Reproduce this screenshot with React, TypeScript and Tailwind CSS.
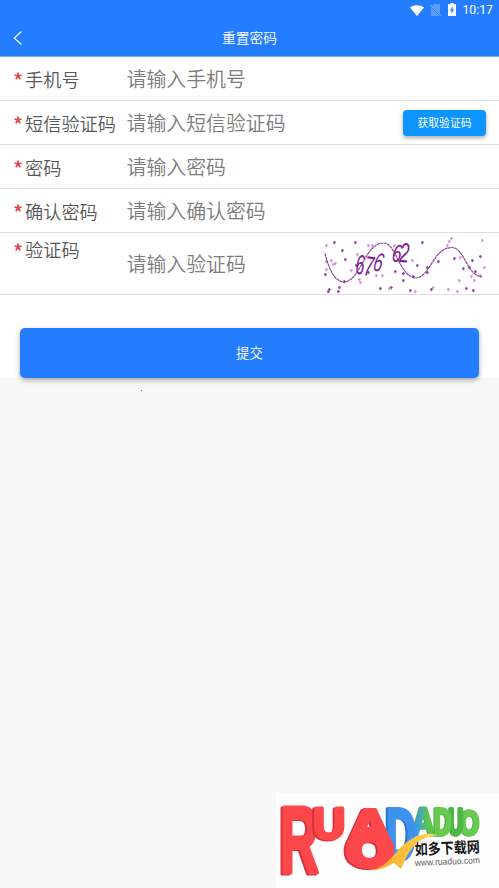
import React from 'react';

interface FieldRowProps {
  label: string;
  placeholder: string;
  children?: React.ReactNode;
}

const FieldRow: React.FC<FieldRowProps> = ({ label, placeholder, children }) => (
  <div className="flex h-11 items-center border-b border-[#dedede] pr-[13px] pl-[14px]">
    <FieldLabel text={label} />
    <input
      type="text"
      placeholder={placeholder}
      className="h-full w-0 flex-1 text-[19.9px] font-[350] text-[#666] outline-none placeholder:text-[#7c7c7c]"
    />
    {children}
  </div>
);

const FieldLabel: React.FC<{ text: string }> = ({ text }) => (
  <label className="flex w-[112.5px] shrink-0 items-center text-[18.2px] leading-[26px] font-[350] text-[#585858]">
    <svg viewBox="0 0 8 8" className="mr-[3px] mb-[5px] h-2 w-2 shrink-0">
      <path
        d="M4 4V.4M4 4L.5 3M4 4l3.500-1M4 4L1.800 7.200M4 4l2.200 3.200"
        stroke="#dc4848"
        strokeWidth="1.8"
        fill="none"
      />
    </svg>
    <span className="whitespace-nowrap">{text}</span>
  </label>
);

const StatusBar: React.FC = () => (
  <div className="flex h-5 items-center justify-end pr-[6px] text-white">
    <svg viewBox="0 0 14 11" className="mr-[6px] h-[11px] w-[14px]">
      <path d="M0 2.6C4-.6 10-.6 14 2.6L7 11z" fill="currentColor" />
    </svg>
    <svg viewBox="0 0 11 12" className="mr-[7px] mb-px h-3 w-[11px]">
      <path d="M4 0h6v12H1V3z" fill="#5c9cff" />
      <path d="M0 1l10.5 10.7" stroke="#247dff" strokeWidth="2" />
      <path d="M0 .5l10.5 11" stroke="#8dbaff" strokeWidth="1" />
    </svg>
    <svg viewBox="0 0 8 13" className="mr-[6px] mb-px h-[13px] w-2">
      <path d="M2.4 0h3.2v1.3H8V13H0V1.3h2.4z" fill="currentColor" />
      <path d="M4.8 3L1.8 7.5h1.9L3.2 11l3-4.6H4.4z" fill="#247dff" />
    </svg>
    <span className="font-[Roboto] text-[12.3px] leading-5">10:17</span>
  </div>
);

// [x, y, shade]
const specks: [number, number, number][] = [
  [19, 12, 1], [40, 12, 1], [11, 15, 0], [53, 15, 0], [57, 15, 0], [107, 12, 1],
  [134, 11, 0], [136, 8, 0], [132, 15, 0], [167, 10, 0], [27, 20, 1], [79, 15, 0],
  [30, 29, 1], [16, 30, 0], [18, 34, 0], [20, 33, 0], [11, 31, 0], [11, 39, 0],
  [10, 44, 1], [41, 35, 1], [42, 24, 0], [53, 42, 1], [61, 45, 0], [67, 45, 0],
  [80, 41, 1], [79, 24, 0], [88, 43, 1], [88, 50, 1], [98, 46, 1], [102, 35, 1],
  [112, 37, 1], [112, 42, 1], [97, 30, 0], [118, 57, 0], [116, 59, 1], [123, 31, 1],
  [139, 28, 1], [145, 27, 0], [144, 50, 0], [148, 38, 1], [154, 37, 1], [157, 30, 1],
  [165, 26, 1], [169, 37, 0], [160, 41, 1], [165, 45, 0], [151, 58, 1], [158, 60, 1],
  [29, 51, 1], [24, 57, 1], [23, 61, 1], [14, 59, 1], [13, 61, 1],
  [44, 49, 0], [45, 52, 0], [65, 58, 1], [76, 57, 1], [74, 58, 0], [95, 60, 1],
  [100, 61, 0], [159, 50, 0], [156, 46, 0], [142, 61, 0], [133, 59, 0], [36, 40, 0],
];

const Captcha: React.FC = () => (
  <svg viewBox="0 0 184 70" className="h-[70px] w-[184px]" aria-label="验证码">
    {specks.map(([x, y, shade], i) => (
      <path
        key={i}
        d={`M${x - 1} ${y + 1.5}h2.8M${x + 0.3} ${y}v3.2`}
        stroke={shade ? '#984fac' : '#d497e0'}
        strokeWidth="1.3"
      />
    ))}
    <path
      d="M10 24C14 40 20 53 30 52.500C46 50 50 13 69 13.500C82 15 84 47 101 48.500C116 47 118 18 137 18C150 19 151 45 167 47.500"
      fill="none"
      stroke="#8a3d98"
      strokeWidth="1.2"
      strokeDasharray="3 .5"
      transform="translate(0 .5)"
    />
    <g
      fill="#7d2090"
      fontFamily="Liberation Sans"
      fontStyle="italic"
      fontSize="28"
    >
      <text transform="translate(40 45) rotate(4) scale(.57 1)">6</text>
      <text transform="translate(48 46) rotate(8) scale(.6 1)">7</text>
      <text transform="translate(57 41) rotate(14) scale(.58 .95)">6</text>
      <text transform="translate(76 32) rotate(10) scale(.6 .9)">6</text>
      <text transform="translate(84 33) rotate(4) scale(.62 1)">2</text>
    </g>
  </svg>
);

interface LogoLetterProps {
  char: string;
  x: number;
  y: number;
  sx: number;
  sy: number;
  color: string;
  weight?: number;
  shade: string;
}

const LogoLetter: React.FC<LogoLetterProps> = ({ char, x, y, sx, sy, color, weight = 5, shade }) => (
  <g className={shade}>
    <text
      transform={`translate(${x} ${y}) scale(${sx} ${sy})`}
      fontFamily="Liberation Sans"
      fontWeight="700"
      fontSize="100"
      fill={color}
      stroke={color}
      strokeWidth={weight}
      strokeLinejoin="round"
    >
      {char}
    </text>
  </g>
);

const redShade = 'drop-shadow-[-2px_1px_0_#d5343c]';
const greenShade = 'drop-shadow-[-1px_0px_0_#43a73c]';
const blueShade = 'drop-shadow-[-2px_0px_0_#2374cc]';

const Watermark: React.FC = () => (
  <div className="self-end bg-[#fefefe]">
    <svg viewBox="0 0 223 95" className="block h-[95px] w-[223px]">
      <defs>
        <linearGradient id="ribbon" x1="0" x2="1">
          <stop offset="0" stopColor="#f6a51e" />
          <stop offset="1" stopColor="#ffd65a" />
        </linearGradient>
        <linearGradient id="mix" x1="0" x2="1">
          <stop offset=".2" stopColor="#3c9be8" />
          <stop offset=".7" stopColor="#5cc54c" />
        </linearGradient>
      </defs>
      <LogoLetter char="O" x={184} y={42} sx={0.25} sy={0.36} color="#66cb50" weight={9} shade={greenShade} />
      <LogoLetter char="U" x={173} y={42} sx={0.2} sy={0.37} color="#4fb845" weight={9} shade={greenShade} />
      <LogoLetter char="A" x={136} y={42} sx={0.32} sy={0.38} color="url(#mix)" weight={7} shade={greenShade} />
      <LogoLetter char="D" x={158} y={42} sx={0.24} sy={0.37} color="#66cb50" weight={9} shade={greenShade} />
      <LogoLetter char="D" x={110} y={67} sx={0.42} sy={0.74} color="#3f91ee" weight={5} shade={blueShade} />
      <LogoLetter char="R" x={4} y={80} sx={0.54} sy={0.94} color="#fd474b" weight={4} shade={redShade} />
      <LogoLetter char="U" x={37} y={46} sx={0.45} sy={0.45} color="#fd474b" weight={7} shade={redShade} />
      <LogoLetter char="A" x={72} y={50} sx={0.6} sy={0.49} color="#fd474b" weight={8} shade={redShade} />
      <LogoLetter char="O" x={71} y={73} sx={0.59} sy={0.46} color="#fd474b" weight={13} shade={redShade} />
      <path
        d="M92 77C116 77 119 49 145 42C151 40 157 41 162 42C148 43 138 50 131 63L125 76L118 70C109 75 101 78 92 77Z"
        fill="url(#ribbon)"
      />
      <g transform="translate(139 62) rotate(-2.500)">
        <text
          fontFamily="Noto Sans CJK SC"
          fontWeight="700"
          fontSize="15"
          textLength="65"
          lengthAdjust="spacingAndGlyphs"
          fill="#151515"
        >
          如多下载网
        </text>
      </g>
      <g transform="translate(139 73) rotate(-2.500)">
        <text
          fontFamily="Liberation Sans"
          fontSize="9.3"
          textLength="65"
          lengthAdjust="spacingAndGlyphs"
          fill="#606060"
        >
          www.ruaduo.com
        </text>
      </g>
    </svg>
  </div>
);

const App: React.FC = () => (
  <div className="flex h-[888px] w-[499px] flex-col justify-between overflow-hidden bg-[#f8f8f8] font-['Noto_Sans_CJK_SC',sans-serif]">
    <div>
      <header className="h-[57px] border-b border-[#78a8f4] bg-[#247dff] text-white">
        <StatusBar />
        <div className="grid h-9 grid-cols-[40px_1fr_40px] items-center">
          <svg viewBox="0 0 10 16" className="ml-[13px] h-4 w-[10px]">
            <path d="M8.500 1.500L1.200 8l7.300 6.500" fill="none" stroke="#fff" strokeWidth="1.100" />
          </svg>
          <h1 className="pb-[2px] text-center text-[13.8px] leading-[34px] font-[350]">重置密码</h1>
        </div>
      </header>
      <main className="h-[321px] bg-white">
        <FieldRow label="手机号" placeholder="请输入手机号" />
        <FieldRow label="短信验证码" placeholder="请输入短信验证码">
          <button className="h-[26px] w-[83px] rounded-[4px] bg-[#0c95ff] pb-[2px] text-[10.8px] leading-6 text-white shadow-[0_2px_4px_rgba(0,0,0,0.35)]">
            获取验证码
          </button>
        </FieldRow>
        <FieldRow label="密码" placeholder="请输入密码" />
        <FieldRow label="确认密码" placeholder="请输入确认密码" />
        <div className="flex h-[62px] items-center overflow-hidden border-b border-[#dedede] pl-[14px]">
          <div className="self-start pt-[3px]">
            <FieldLabel text="验证码" />
          </div>
          <input
            type="text"
            placeholder="请输入验证码"
            className="h-full w-0 flex-1 text-[19.9px] font-[350] text-[#666] outline-none placeholder:text-[#7c7c7c]"
          />
          <Captcha />
        </div>
        <div className="px-5 pt-[33px]">
          <button className="block h-[50px] w-full rounded-[5px] bg-[#247dff] pb-[2px] text-[13.4px] font-[350] text-white shadow-[0_2px_5px_rgba(0,0,0,0.35)]">
            提交
          </button>
        </div>
      </main>
      <div className="mt-[12px] ml-[141px] h-px w-px bg-[#777]" />
    </div>
    <Watermark />
  </div>
);

export default App;
